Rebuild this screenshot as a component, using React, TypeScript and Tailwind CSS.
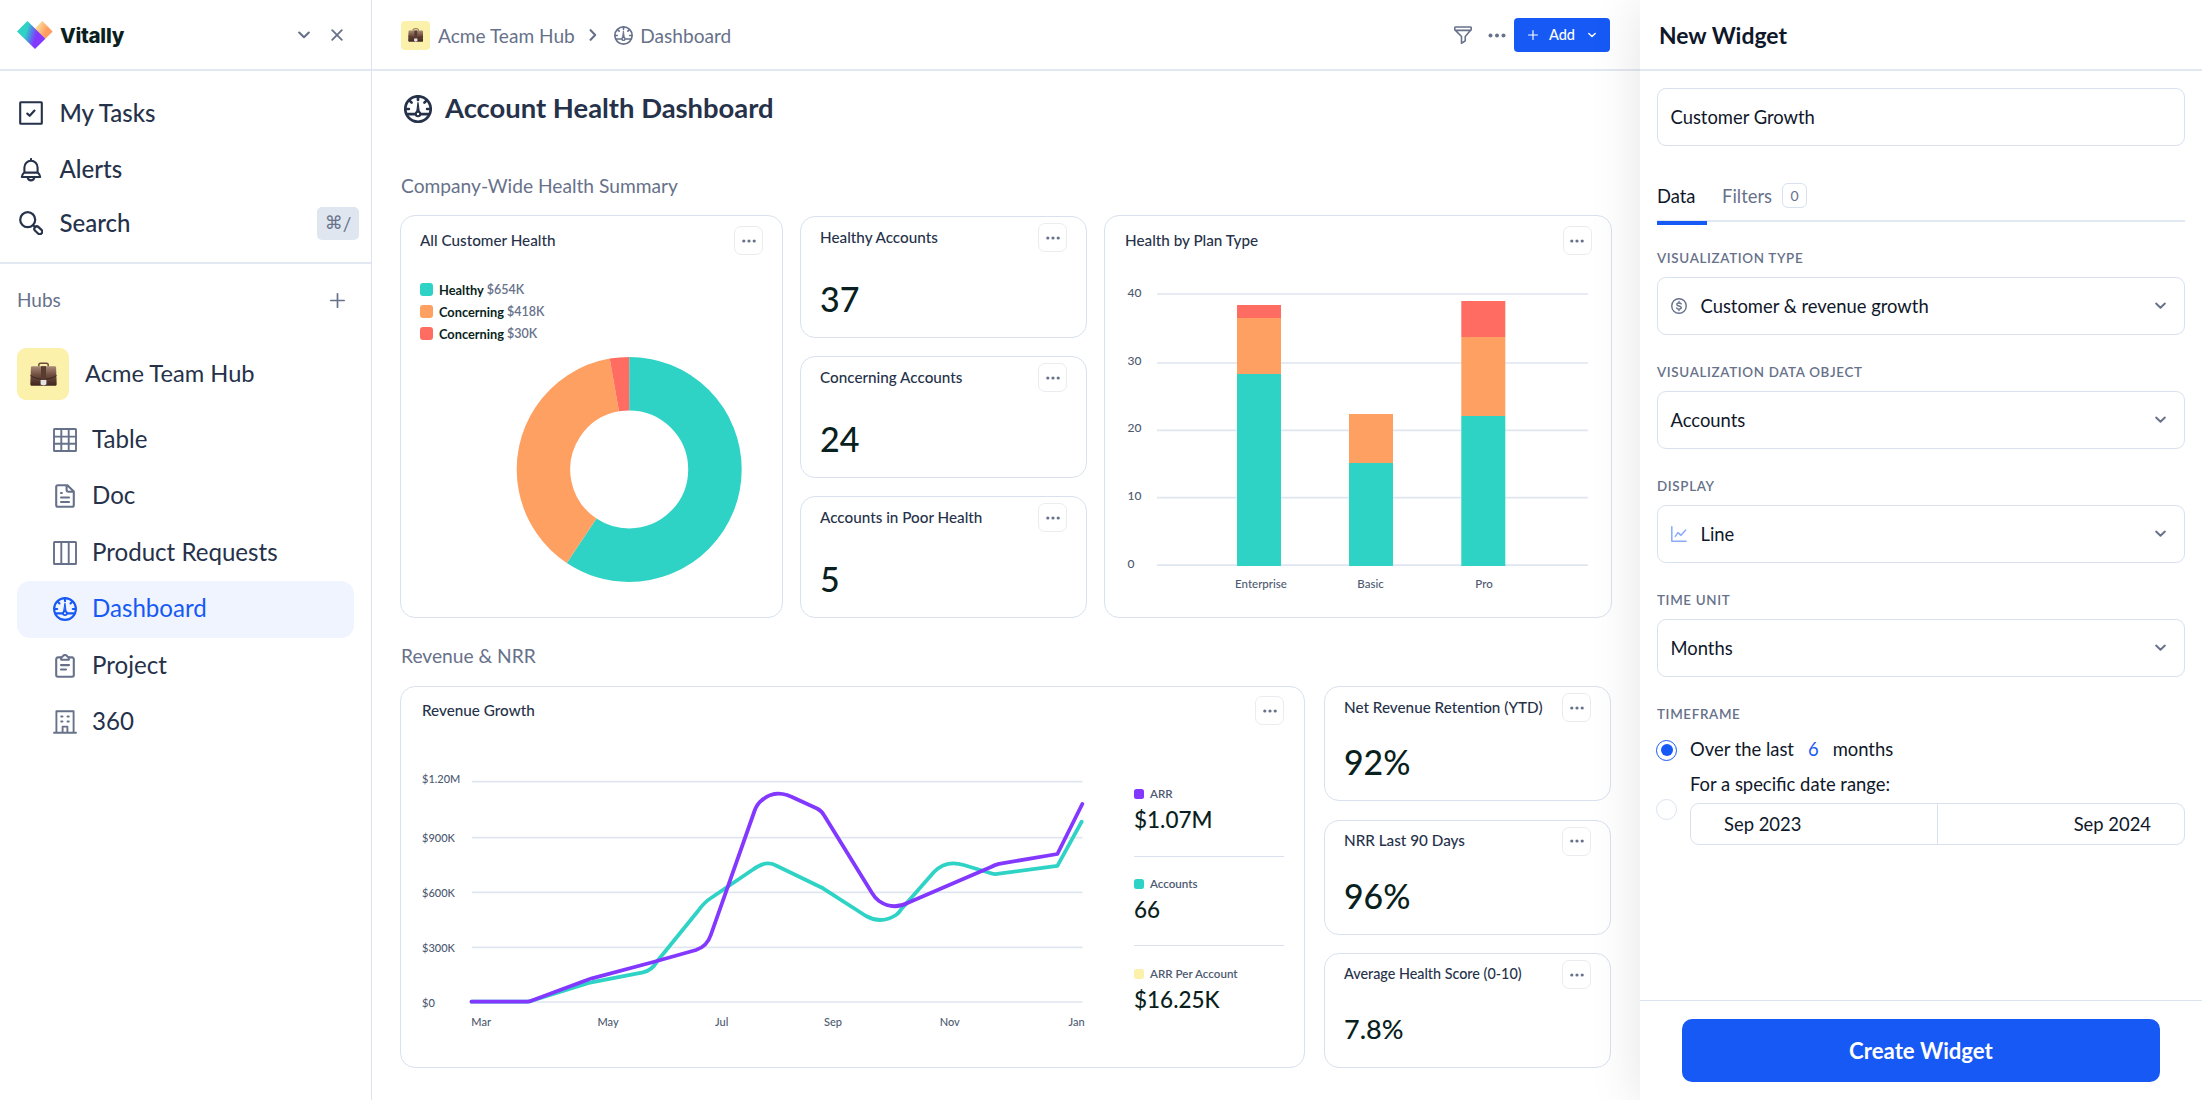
import type { ReactNode, SVGProps } from "react";

type IconProps = SVGProps<SVGSVGElement>;

function Svg({ children, ...props }: IconProps) {
  return (
    <svg viewBox="0 0 24 24" fill="none" stroke="currentColor" strokeWidth={2.1} strokeLinecap="round" strokeLinejoin="round" {...props}>
      {children}
    </svg>
  );
}

const GaugeIcon = (p: IconProps) => (
  <Svg strokeWidth={2.1} {...p}>
    <circle cx="12" cy="12" r="10.9" />
    <path d="M3 16.400h6.600M14.400 16.400H21M12 1.400v2.800M1.400 12h2.800M19.800 12h2.800M4.800 4.800l1.700 1.700M19.200 4.800l-1.700 1.700" />
    <path d="M12 6.600l1.100 8h-2.200z" fill="currentColor" strokeWidth={1} />
    <circle cx="12" cy="16.300" r="1.900" strokeWidth={1.700} />
  </Svg>
);

const TaskIcon = (p: IconProps) => (
  <Svg {...p}>
    <rect x="1.200" y="1.200" width="21.600" height="21.600" rx="0.600" />
    <path d="M8.300 12.600l2.400 2.200 4.800-5.200" strokeWidth={2.200} />
  </Svg>
);

const BellIcon = (p: IconProps) => (
  <Svg {...p}>
    <path d="M12 1v1.600M5.400 14.600V9.400a6.600 6.600 0 0113.200 0v5.200M5.200 14.600h13.600c.8.8 2.400 2.200 2.400 4.400H2.800c0-2.200 1.600-3.600 2.400-4.400zM8.600 19.600c.4 1.800 1.800 2.800 3.400 2.800s3-1 3.400-2.800" />
  </Svg>
);

const SearchIcon = (p: IconProps) => (
  <Svg strokeWidth={2.200} {...p}>
    <circle cx="8.700" cy="8.700" r="7.500" />
    <path d="M14.200 14.200l1.800 1.800" />
    <rect x="14.800" y="16.800" width="9" height="5" rx="2.500" transform="rotate(43 19.300 19.300)" />
  </Svg>
);

const TableIcon = (p: IconProps) => (
  <Svg strokeWidth={1.900} {...p}>
    <rect x="1" y="1" width="22" height="22" rx="0.600" />
    <path d="M8.300 1v22M15.700 1v22M1 8.600h22M1 15.700h22" />
  </Svg>
);

const DocIcon = (p: IconProps) => (
  <Svg {...p}>
    <path d="M5 1.200h9.400l6.400 6.400V21a1.800 1.800 0 01-1.800 1.800H5A1.800 1.800 0 013.200 21V3A1.800 1.800 0 015 1.200zM13.600 1.400v4.400c0 1.200.8 2 2 2h5M8 13.500h8M8 18h8M8 9h.9" />
  </Svg>
);

const ColumnsIcon = (p: IconProps) => (
  <Svg strokeWidth={1.900} {...p}>
    <rect x="1" y="1" width="22" height="22" rx="0.600" />
    <path d="M8.300 1v22M15.700 1v22" />
  </Svg>
);

const ClipboardIcon = (p: IconProps) => (
  <Svg {...p}>
    <path d="M7.600 3.400H4.900a1.700 1.700 0 00-1.700 1.700v16a1.700 1.700 0 001.700 1.700h14.200a1.700 1.700 0 001.700-1.700v-16a1.700 1.700 0 00-1.700-1.700h-2.700" />
    <path d="M8.200 3.200c.8 0 1.400-.4 1.800-1.200.4-.7 1.100-1 2-1s1.600.3 2 1c.4.8 1 1.200 1.800 1.200v2.600H8.200zM8 11.100h8M8 15.500h5" />
  </Svg>
);

const BuildingIcon = (p: IconProps) => (
  <Svg strokeWidth={1.900} {...p}>
    <path d="M3.400 22.800V1.200h17.200v21.600M1 22.800h22M9.600 22.800v-6.200h4.800v6.200M8.200 6.500h1.300M14.500 6.500h1.300M8.200 11.500h1.300M14.500 11.500h1.300" />
  </Svg>
);

const FilterIcon = (p: IconProps) => (
  <Svg strokeWidth={2.100} {...p}>
    <path d="M2.200 1.400h19.600c.7 0 1.200.5 1.200 1.200v2.200L15 14v5.800L10 23v-9L1 4.800V2.600c0-.7.5-1.200 1.200-1.200zM1.400 5.800h21.200" />
  </Svg>
);

const DollarIcon = (p: IconProps) => (
  <Svg strokeWidth={2.100} {...p}>
    <circle cx="12" cy="12" r="10.900" />
    <path d="M15.200 8.900c-.5-1-1.700-1.500-3.200-1.500-1.900 0-3.200.8-3.200 2.200 0 3.300 6.600 1.400 6.600 4.800 0 1.400-1.400 2.300-3.400 2.300-1.700 0-3-.7-3.500-1.800M12 5.300v2M12 16.700v2" />
  </Svg>
);

const LineChartIcon = (p: IconProps) => (
  <Svg strokeWidth={2.300} {...p}>
    <path d="M1.200 1.200v21.600h21.400M6.400 15.600l4-5.600 4.600 4 7-8" />
  </Svg>
);

const ChevronDown = (p: IconProps) => (
  <svg viewBox="0 0 12 8" fill="none" stroke="currentColor" strokeWidth={2.100} strokeLinecap="round" strokeLinejoin="round" {...p}>
    <path d="M1.200 1.600L6 6.200l4.800-4.600" />
  </svg>
);

const PlusIcon = (p: IconProps) => (
  <svg viewBox="0 0 14 14" fill="none" stroke="currentColor" strokeWidth={1.600} strokeLinecap="round" {...p}>
    <path d="M7 .8v12.400M.8 7h12.400" />
  </svg>
);

const Dots = ({ className }: { className: string }) => (
  <svg viewBox="0 0 14 4" fill="currentColor" className={className}>
    <circle cx="1.800" cy="2" r="1.600" />
    <circle cx="7" cy="2" r="1.600" />
    <circle cx="12.200" cy="2" r="1.600" />
  </svg>
);

function Briefcase({ className }: { className: string }) {
  return (
    <svg viewBox="0 0 27 24" className={className}>
      <defs>
        <linearGradient id="leather" x1="0" y1="0" x2="0" y2="1">
          <stop offset="0" stopColor="#a98a78" />
          <stop offset="0.450" stopColor="#6f4e40" />
          <stop offset="1" stopColor="#3f2620" />
        </linearGradient>
      </defs>
      <path d="M8.800 4.600V2.800c0-1 .8-1.600 1.800-1.600h5.800c1 0 1.800.6 1.800 1.600v1.800" fill="none" stroke="#6d4c3d" strokeWidth="1.500" />
      <path d="M2.400 4.200h22.200c.8 0 1.400.5 1.500 1.300l.6 16.700c0 .9-.6 1.500-1.500 1.500H1.800c-.9 0-1.500-.6-1.500-1.500L.9 5.500c.1-.8.7-1.300 1.500-1.300z" fill="url(#leather)" />
      <path d="M.5 13.500c3.500 2.500 8 3.500 13 3.500s9.500-1 13-3.500" fill="none" stroke="#3a211b" strokeWidth="0.900" />
      <rect x="11" y="4.200" width="5" height="14" fill="#5a3b30" />
      <path d="M10.600 18h5.800v4.400l-2.900 1.200-2.900-1.200z" fill="#e6e4e2" />
    </svg>
  );
}

function Logo() {
  return (
    <svg viewBox="0 0 36 28" className="h-7 w-9">
      <defs>
        <linearGradient id="logoLeft" gradientUnits="userSpaceOnUse" x1="9" y1="10" x2="19.500" y2="13">
          <stop offset="0" stopColor="#2fd3c5" />
          <stop offset="0.450" stopColor="#4d8de0" />
          <stop offset="1" stopColor="#8338ff" />
        </linearGradient>
        <linearGradient id="logoRight" gradientUnits="userSpaceOnUse" x1="19" y1="6" x2="29" y2="11">
          <stop offset="0" stopColor="#fbdf9b" />
          <stop offset="1" stopColor="#ff9d61" />
        </linearGradient>
      </defs>
      <path d="M17.700 7.700L25.300 0l10.400 10.600-7.300 7.100z" fill="url(#logoRight)" />
      <path d="M0 10.600L10.400 0l18 17.700L18 28z" fill="url(#logoLeft)" />
    </svg>
  );
}

function NavRow({ icon, label, height, children }: { icon: ReactNode; label: string; height: string; children?: ReactNode }) {
  return (
    <div className={`flex items-center ${height}`}>
      {icon}
      <span className="ml-[16.500px] pb-[1px] text-[24px] leading-none font-medium">{label}</span>
      {children}
    </div>
  );
}

const hubItems = [
  { label: "Table", Icon: TableIcon },
  { label: "Doc", Icon: DocIcon },
  { label: "Product Requests", Icon: ColumnsIcon },
  { label: "Dashboard", Icon: GaugeIcon, active: true },
  { label: "Project", Icon: ClipboardIcon },
  { label: "360", Icon: BuildingIcon },
];

function Sidebar() {
  return (
    <aside className="flex w-[372px] shrink-0 flex-col border-r border-[#dbe3ef] text-[#26324a]">
      <div className="flex h-[71px] shrink-0 items-center border-b-2 border-[#e2e8f2] pt-px pr-[28px] pl-[17px]">
        <Logo />
        <span className="ml-[7px] pt-[2px] font-['Inter'] text-[20.500px] leading-none font-extrabold tracking-[-0.300px] text-[#0b1f20]">Vitally</span>
        <ChevronDown className="ml-auto h-2 w-3 text-[#67718a]" />
        <svg viewBox="0 0 12 12" className="ml-[21px] size-3 text-[#67718a]" fill="none" stroke="currentColor" strokeWidth={1.800} strokeLinecap="round">
          <path d="M1.200 1.200l9.600 9.600M10.800 1.200l-9.600 9.600" />
        </svg>
      </div>
      <nav className="flex h-[193px] shrink-0 flex-col border-b-2 border-[#e2e8f2] pt-[14px] pr-3 pl-[19px]">
        <NavRow icon={<TaskIcon className="size-6" />} label="My Tasks" height="h-[56px]" />
        <NavRow icon={<BellIcon className="size-6" />} label="Alerts" height="h-[57px]" />
        <NavRow icon={<SearchIcon className="size-6" />} label="Search" height="h-[50px]">
          <span className="ml-auto flex h-[33px] w-[42px] items-center justify-center rounded-[5px] bg-[#dfe6ef] text-[19px] leading-none text-[#67718a]">
            <span className="font-['DejaVu_Sans'] text-[18px]">⌘</span>/
          </span>
        </NavRow>
      </nav>
      <div className="flex h-[72px] items-center justify-between pr-[26px] pl-[17px] text-[#67718a]">
        <span className="pb-[2px] text-[19px] leading-none">Hubs</span>
        <PlusIcon className="size-[15px]" />
      </div>
      <div className="flex h-[75.500px] items-center pl-[17px]">
        <span className="flex size-[52px] items-center justify-center rounded-[9px] bg-[#fbf1ab]">
          <Briefcase className="h-6 w-[27px]" />
        </span>
        <span className="ml-4 text-[23.700px] leading-none">Acme Team Hub</span>
      </div>
      <div className="pr-[17px] pl-[17px]">
        {hubItems.map(({ label, Icon, active }) => (
          <div key={label} className={`flex h-[56.500px] items-center rounded-[13px] pl-9 ${active ? "bg-[#eff4ff] text-[#1759f5]" : ""}`}>
            <Icon className={`size-6 ${active ? "" : "text-[#67718a]"}`} />
            <span className="ml-[15px] pb-[2px] text-[24.100px] leading-none">{label}</span>
          </div>
        ))}
      </div>
    </aside>
  );
}

function MoreButton() {
  return (
    <span className="flex size-[29px] shrink-0 items-center justify-center rounded-[7px] border border-[#eaecf0] text-[#67718a]">
      <Dots className="h-1 w-[14px]" />
    </span>
  );
}

type CardProps = { title: string; className: string; header: string; titleClass?: string; children: ReactNode };

function Card({ title, className, header, titleClass = "text-[15.250px]", children }: CardProps) {
  return (
    <section className={`flex flex-col rounded-[15px] border border-[#d8e1ed] ${className}`}>
      <div className={`flex items-center justify-between ${header}`}>
        <h3 className={`leading-none font-medium whitespace-nowrap text-[#26324a] ${titleClass}`}>{title}</h3>
        <MoreButton />
      </div>
      {children}
    </section>
  );
}

function StatCard({ title, value, className, valueClass, titleClass }: { title: string; value: string; className: string; valueClass: string; titleClass?: string }) {
  return (
    <Card title={title} className={className} header="pt-[6px] pr-[19px] pl-[19px]" titleClass={titleClass}>
      <div className={`pl-[19px] leading-10 font-medium text-[#0a1f20] ${valueClass}`}>{value}</div>
    </Card>
  );
}

const slices = [
  { color: "#2fd3c5", start: 0, size: 213.700 },
  { color: "#ffa063", start: 213.700, size: 136.300 },
  { color: "#ff6d62", start: 350, size: 10 },
];

const healthLegend = [
  { swatch: "bg-[#2fd3c5]", name: "Healthy", value: "$654K" },
  { swatch: "bg-[#ffa063]", name: "Concerning", value: "$418K" },
  { swatch: "bg-[#ff6d62]", name: "Concerning", value: "$30K" },
];

function HealthCard() {
  return (
    <Card title="All Customer Health" className="h-[403px] w-[383px]" header="pt-[10px] pr-[19px] pl-[19px]">
      <ul className="mt-[23px] pl-[19px]">
        {healthLegend.map((item) => (
          <li key={item.value} className="flex h-[22.200px] items-center text-[12.800px] leading-none font-bold text-[#0a1f20]">
            <span className={`mr-[6px] size-[13px] rounded-[3px] ${item.swatch}`} />
            <span className="pt-[2px]">{item.name}</span>
            <span className="ml-[3px] pt-[2px] text-[12.500px] font-semibold text-[#67718a]">{item.value}</span>
          </li>
        ))}
      </ul>
      <svg viewBox="0 0 226 226" className="mt-[11.500px] ml-[115px] size-[226px]">
        {slices.map((s) => (
          <circle key={s.color} cx="113.200" cy="113.400" r="85.750" fill="none" stroke={s.color} strokeWidth="53.500" pathLength={360} strokeDasharray={`${s.size} ${360 - s.size}`} transform={`rotate(${s.start - 90} 113.200 113.400)`} />
        ))}
      </svg>
    </Card>
  );
}

const planBars = [
  { name: "Enterprise", x: 1237, label: 1261, parts: [["#ff6d62", 305, 13], ["#ffa063", 318, 56], ["#2fd3c5", 374, 192]] },
  { name: "Basic", x: 1349, label: 1370.500, parts: [["#ffa063", 414, 49], ["#2fd3c5", 463, 103]] },
  { name: "Pro", x: 1461.300, label: 1484, parts: [["#ff6d62", 301, 36], ["#ffa063", 337, 79], ["#2fd3c5", 416, 150]] },
] as const;

const planTicks = [
  [40, 294, 297],
  [30, 363, 364.500],
  [20, 430.300, 432],
  [10, 497.700, 500],
  [0, 565.200, 568],
] as const;

function PlanCard() {
  return (
    <Card title="Health by Plan Type" className="h-[403px] w-[507.500px]" header="pt-[10px] pr-[19px] pl-[20px]">
      <svg viewBox="1105 255 505 362" className="h-[362px] w-[505px]" fontSize="12" fill="#4d5a71">
        {planTicks.map(([v, y, base]) => (
          <g key={v}>
            <line x1="1157" x2="1588" y1={y} y2={y} stroke="#dfe6f0" strokeWidth="1.700" />
            <text x="1127.500" y={base} fontWeight="500">{v}</text>
          </g>
        ))}
        {planBars.map((bar) => (
          <g key={bar.name}>
            {bar.parts.map(([color, y, h]) => (
              <rect key={color} x={bar.x} y={y} width="44" height={h} fill={color} />
            ))}
            <text x={bar.label} y="588" textAnchor="middle" fontWeight="500" fontSize="11.500">{bar.name}</text>
          </g>
        ))}
      </svg>
    </Card>
  );
}

const revenueTicks = [
  ["$1.20M", 781.700, 782.700],
  ["$900K", 837.700, 841.700],
  ["$600K", 892.300, 897],
  ["$300K", 947.300, 952],
  ["$0", 1002, 1007],
] as const;

const months = [["Mar", 471.300], ["May", 597.500], ["Jul", 715], ["Sep", 824], ["Nov", 939.700], ["Jan", 1068.500]] as const;

const revenueLegend = [
  { swatch: "bg-[#8338ff]", name: "ARR", value: "$1.07M" },
  { swatch: "bg-[#2fd3c5]", name: "Accounts", value: "66" },
  { swatch: "bg-[#fbf1ab]", name: "ARR Per Account", value: "$16.25K" },
];

function RevenueCard() {
  return (
    <Card title="Revenue Growth" className="h-[381.500px] w-[905px]" header="pt-[9px] pr-[20px] pl-[21px]">
      <div className="flex">
        <svg viewBox="401 725 733 341" className="h-[341px] w-[733px] shrink-0" fontSize="11" fontWeight="500" fill="#4d5a71">
          {revenueTicks.map(([label, y, base]) => (
            <g key={label}>
              <line x1="472" x2="1082.500" y1={y} y2={y} stroke="#dfe6f0" strokeWidth="1.700" />
              <text x="422" y={base}>{label}</text>
            </g>
          ))}
          {months.map(([m, x]) => (
            <text key={m} x={x} y="1026" fontSize="11">{m}</text>
          ))}
          <g fill="none" strokeWidth="3.800" strokeLinecap="round" strokeLinejoin="round">
            <path
              stroke="#2fd3c5"
              d="M471.500 1001.700H528.500L588.700 982.900L643 972.300Q652 970.500 657 961.500L698 911Q704.500 902 711 898L753 869.500Q766 859.500 777 866L823 888.300L866 916Q881 924.500 896 915Q899 913 901 909.500L934 872Q946 859.500 963.700 865L991 873.300Q995 874.700 999 873.700L1057.400 865.800L1081.700 821.700"
            />
            <path
              stroke="#8338ff"
              d="M471.500 1001.700H527Q529.500 1001.700 532 1000.500L587 980Q589 979.200 592 978.300L653.400 962L696 950Q707 946.500 710.800 935L754.500 811Q757 804 761.500 800.500Q773 790.500 787 795Q789.500 796 792 797L817 808.500Q822 811 824.500 816L872 893Q875 898 879 901Q893 910.500 908 902.700L991 867Q995 864.800 999 863.900L1057.400 854L1082.300 804"
            />
          </g>
        </svg>
        <div className="w-[150px] pt-[61px]">
          {revenueLegend.map((item, i) => (
            <div key={item.name} className={i > 0 ? "h-[89.500px] border-t-[1.500px] border-[#d8e1ed] pt-[19.500px]" : "h-[69.500px]"}>
              <div className="flex h-4 items-center text-[11.600px] leading-none font-semibold text-[#4d5a71]">
                <span className={`mr-[6px] size-[10px] rounded-[2.500px] ${item.swatch}`} />
                {item.name}
              </div>
              <div className="mt-[3px] text-[22.500px] leading-[30px] font-medium text-[#0a1f20]">{item.value}</div>
            </div>
          ))}
        </div>
      </div>
    </Card>
  );
}

function Main() {
  return (
    <main className="flex w-[1268px] shrink-0 flex-col">
      <header className="flex h-[71px] shrink-0 items-center border-b-2 border-[#e2e8f2] pt-px pr-[30px] pl-[29px] text-[19.100px] leading-none text-[#67718a]">
        <span className="flex size-[29px] items-center justify-center rounded-[4px] bg-[#fbf1ab]">
          <Briefcase className="h-[14px] w-[15.500px]" />
        </span>
        <span className="ml-2 pt-px">Acme Team Hub</span>
        <ChevronDown className="ml-[12.500px] h-2 w-3 -rotate-90" />
        <GaugeIcon className="ml-[15px] size-[19px]" />
        <span className="ml-[7px] pt-px">Dashboard</span>
        <FilterIcon className="ml-auto size-[18px]" />
        <Dots className="ml-[16px] h-[5px] w-[18px]" />
        <button className="ml-[8px] flex h-[34px] w-[96px] items-center rounded-[4px] bg-[#1759f5] pl-[14px] text-[14.500px] font-medium text-white">
          <PlusIcon className="size-[10px]" />
          <span className="ml-[11px] pt-px leading-none">Add</span>
          <ChevronDown className="ml-auto mr-[14px] h-[6px] w-2" />
        </button>
      </header>
      <div className="flex h-[74px] items-center pl-8 text-[#26324a]">
        <GaugeIcon className="mt-[2px] size-7" strokeWidth={2.300} />
        <h1 className="ml-[13px] text-[27.400px] leading-none font-bold">Account Health Dashboard</h1>
      </div>
      <h2 className="flex h-[70px] items-center pt-[11px] pl-[29px] text-[19.200px] leading-none text-[#67718a]">Company-Wide Health Summary</h2>
      <div className="flex gap-[17px] pl-7">
        <HealthCard />
        <div className="flex flex-col gap-[18px] pt-px">
          <StatCard title="Healthy Accounts" value="37" className="h-[122px] w-[287px]" valueClass="mt-[27px] text-[34px]" />
          <StatCard title="Concerning Accounts" value="24" className="h-[122px] w-[287px]" valueClass="mt-[27px] text-[34px]" />
          <StatCard title="Accounts in Poor Health" value="5" className="h-[122px] w-[287px]" valueClass="mt-[27px] text-[34px]" />
        </div>
        <PlanCard />
      </div>
      <h2 className="flex h-[68px] items-center pt-[7px] pl-[29px] text-[19.200px] leading-none text-[#67718a]">Revenue &amp; NRR</h2>
      <div className="flex gap-[19px] pl-7">
        <RevenueCard />
        <div className="flex flex-col gap-[18.500px]">
          <StatCard title="Net Revenue Retention (YTD)" value="92%" className="h-[115px] w-[287px]" valueClass="mt-[20px] text-[33.800px]" />
          <StatCard title="NRR Last 90 Days" value="96%" className="h-[115px] w-[287px]" valueClass="mt-[20px] text-[33.800px]" />
          <StatCard title="Average Health Score (0-10)" value="7.8%" className="h-[115px] w-[287px]" valueClass="mt-[20px] text-[27px]" titleClass="text-[14.350px]" />
        </div>
      </div>
    </main>
  );
}

function FieldLabel({ children, height = "h-14" }: { children: ReactNode; height?: string }) {
  return (
    <div className={`flex items-center pt-[18.500px] text-[13.400px] leading-none font-semibold tracking-[0.650px] text-[#67718a] uppercase ${height}`}>{children}</div>
  );
}

function SelectBox({ icon, value }: { icon?: ReactNode; value: string }) {
  return (
    <div className="flex h-[58px] items-center rounded-[9px] border border-[#d8e1ed] pr-[18px] pl-[12.500px] text-[18.400px] leading-none">
      {icon}
      <span>{value}</span>
      <ChevronDown className="ml-auto h-[7.500px] w-[11px] text-[#67718a]" />
    </div>
  );
}

function WidgetPanel() {
  return (
    <aside className="relative z-10 flex w-[562px] shrink-0 flex-col bg-white text-[#0f172a] shadow-[0_4px_50px_rgba(0,0,0,0.110)]">
      <div className="flex h-[71px] shrink-0 items-center border-b-2 border-[#e2e8f2] pt-[2px] pl-[19px] text-[22.900px] leading-none font-bold">New Widget</div>
      <div className="px-[17px] pt-[17px]">
        <div className="flex h-[58px] items-center rounded-[9px] border border-[#d8e1ed] pl-[12.500px] text-[18.400px] leading-none">Customer Growth</div>
        <div className="relative flex h-[76px] items-center border-b-2 border-[#e2e8f2] pt-[25.500px] text-[18.400px] leading-none">
          <span className="pt-px">Data</span>
          <span className="absolute -bottom-[5px] left-0 h-1 w-[50px] bg-[#1759f5]" />
          <span className="ml-[26.500px] pt-px text-[#67718a]">Filters</span>
          <span className="ml-[10px] flex size-[25px] items-center justify-center rounded-[6px] border-[1.500px] border-[#d8e1ed] text-[14px] text-[#67718a]">0</span>
        </div>
        <FieldLabel height="h-[55px]">Visualization type</FieldLabel>
        <SelectBox icon={<DollarIcon className="mr-[14px] size-4 text-[#67718a]" />} value="Customer & revenue growth" />
        <FieldLabel>Visualization data object</FieldLabel>
        <SelectBox value="Accounts" />
        <FieldLabel>Display</FieldLabel>
        <SelectBox icon={<LineChartIcon className="mr-[14px] size-4 text-[#8aabfb]" />} value="Line" />
        <FieldLabel>Time unit</FieldLabel>
        <SelectBox value="Months" />
        <FieldLabel>Timeframe</FieldLabel>
        <div className="-ml-px flex h-[34px] items-center text-[18.400px] leading-none">
          <span className="flex size-[21px] items-center justify-center rounded-full border-[1.500px] border-[#1759f5]">
            <span className="size-3 rounded-full bg-[#1759f5]" />
          </span>
          <span className="ml-[13px] pb-[2px]">Over the last</span>
          <span className="ml-[14px] pb-[2px] text-[#1759f5]">6</span>
          <span className="ml-[14px] pb-[2px]">months</span>
        </div>
        <div className="-ml-px flex text-[18.400px]">
          <span className="mt-[32px] size-[21px] shrink-0 rounded-full border border-[#dbe3ef]" />
          <div className="ml-[13px] flex-1 pt-[5px]">
            <div className="leading-6">For a specific date range:</div>
            <div className="mt-[7px] flex h-[42px] rounded-[9px] border border-[#d8e1ed] leading-[40px]">
              <div className="flex-1 border-r border-[#d8e1ed] pl-[33px]">Sep 2023</div>
              <div className="flex-1 pr-[33px] text-right">Sep 2024</div>
            </div>
          </div>
        </div>
      </div>
      <div className="mt-auto h-[100px] shrink-0 border-t-[1.500px] border-[#dbe3ef] px-[42px] pt-[18px]">
        <button className="h-[63px] w-full rounded-[10px] bg-[#1759f5] pt-px text-[22.200px] font-bold text-white">Create Widget</button>
      </div>
    </aside>
  );
}

export default function App() {
  return (
    <div className="flex h-[1100px] w-[2202px] overflow-hidden bg-white font-['Lato',sans-serif]">
      <Sidebar />
      <Main />
      <WidgetPanel />
    </div>
  );
}
